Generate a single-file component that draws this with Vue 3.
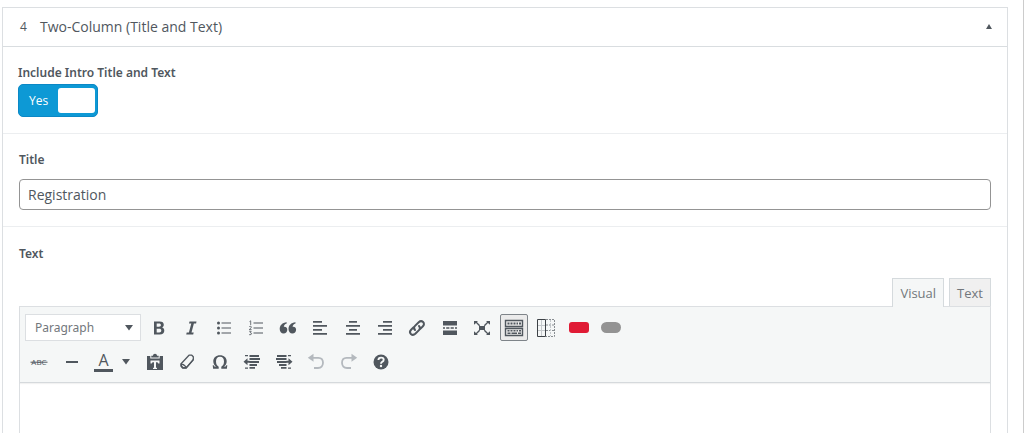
<script setup>
import { ref } from 'vue'

const intro = ref(true)
const title = ref('Registration')
const block = ref('Paragraph')

const mainTools = [
  'Bold', 'Italic', 'Bulleted list', 'Numbered list', 'Blockquote',
  'Align left', 'Align center', 'Align right', 'Insert link', 'Read more',
  'Fullscreen', 'Toolbar toggle', 'Columns', 'Red button', 'Grey button',
]
const leadTools = ['Strikethrough', 'Horizontal line']
const moreTools = [
  'Paste as text', 'Clear formatting', 'Special character', 'Decrease indent',
  'Increase indent', 'Undo', 'Redo', 'Help',
]

const icons = {
  'Bold': '<path fill-rule="evenodd" d="M5 3.500h5.600c2.900 0 4.200 1.200 4.200 3.300 0 1.400-.8 2.400-1.900 2.800 1.500.3 2.400 1.400 2.400 3.100 0 2.400-1.700 3.800-4.500 3.800H5zM7.700 5.500v3.200H10c1.300 0 1.900-.6 1.900-1.600S11.300 5.500 10 5.500zm0 5.200v3.700h2.500c1.400 0 2.100-.6 2.100-1.900 0-1.200-.7-1.800-2.100-1.800z"/>',
  'Italic': '<path d="M8.500 3.500h7l-.4 1.900h-2.200l-2.400 9.200h2.200l-.5 1.900h-7l.5-1.900h2.200l2.400-9.200H8z"/>',
  'Bulleted list': '<circle cx="4.500" cy="5" r="1.500"/><circle cx="4.500" cy="10" r="1.500"/><circle cx="4.500" cy="15" r="1.500"/><path d="M7.500 4.400H17v1.200H7.500zM7.500 9.400H17v1.200H7.500zM7.500 14.400H17v1.200H7.500z"/>',
  'Numbered list': '<path d="M7.500 4.400H17v1.200H7.500zM7.500 9.400H17v1.200H7.500zM7.500 14.400H17v1.200H7.500z"/><path fill="none" stroke="currentColor" stroke-width=".8" d="M3.500 3.600l1.200-.8V7M3.200 9q.3-.7 1.200-.7 1 0 1 .8 0 .8-2.200 2.500h2.400M3.200 13.300h2l-1 1.400q1.400 0 1.400 1.100 0 1.200-2.500.9"/>',
  'Blockquote': '<path d="M8.700 4.200v1.200C6.900 6 5.900 7.200 5.800 8.800c2-.4 3.500 1 3.500 3 0 2.200-1.600 3.800-3.700 3.800-2.300 0-3.900-1.900-3.900-4.600 0-3.800 2.600-6.300 7-6.800zM17.500 4.200v1.200c-1.800.6-2.800 1.800-2.900 3.400 2-.4 3.500 1 3.500 3 0 2.200-1.600 3.800-3.700 3.800-2.300 0-3.900-1.900-3.900-4.600 0-3.800 2.600-6.300 7-6.800z"/>',
  'Align left': '<path d="M3 3h9v1.700H3zM3 7h14v1.700H3zM3 11h9v1.700H3zM3 15h14v1.700H3z"/>',
  'Align center': '<path d="M6 3h8v1.700H6zM3 7h14v1.700H3zM6 11h8v1.700H6zM3 15h14v1.700H3z"/>',
  'Align right': '<path d="M8 3h9v1.700H8zM3 7h14v1.700H3zM8 11h9v1.700H8zM3 15h14v1.700H3z"/>',
  'Insert link': '<g fill="none" stroke="currentColor" stroke-width="2" stroke-linecap="round"><path d="M8 12c-1.200-1.200-1.200-2.900 0-4.100l3.700-3.700c1.400-1.300 3.200-1.300 4.400-.2 1.200 1.200 1.100 3-.2 4.300l-2.300 2.300"/><path d="M12 8c1.200 1.200 1.200 2.900 0 4.100l-3.700 3.700c-1.400 1.300-3.200 1.300-4.400.2-1.200-1.200-1.100-3 .2-4.300l2.300-2.300"/></g>',
  'Read more': '<path d="M3 3h14v4.500H3zM3 9.300h2v1.500H3zM6.200 9.300h3.200v1.500H6.200zM10.600 9.300h3.200v1.500h-3.200zM15 9.300h2v1.500h-2zM3 12.500h14V17H3z"/>',
  'Fullscreen': '<path d="M7 8h6v4H7z"/><path d="M2 3h4L4.900 4.100l3.300 3.100-1 1-3.200-3.200L2 6.800zM18 3h-4l1.100 1.100-3.300 3.100 1 1L16 5l2 1.800zM2 17h4l-1.100-1.100 3.300-3.100-1-1L4 15l-2-1.800zM18 17h-4l1.100-1.100-3.300-3.100 1-1L16 15l2-1.800z"/>',
  'Toolbar toggle': '<path fill="none" stroke="currentColor" stroke-width="1.400" d="M1.500 2.500h17v6h-17zM1.500 10.500h17v7h-17z"/><path d="M3.500 4.500h2v2h-2zM6.500 4.500h2v2h-2zM9.500 4.500h2v2h-2zM12.500 4.500h1.500v2h-1.500zM15 4.500h2v2h-2zM3.500 12h2v1.500h-2zM6.500 12h2v1.500h-2zM9.500 12h2v1.500h-2zM12.500 12H14v1.500h-1.500zM15 12h2v1.500h-2zM3.500 14.500h3V16h-3zM7.500 14.500H13V16H7.500zM14 14.500h3V16h-3z"/>',
  'Columns': '<g fill="none" stroke="currentColor"><path stroke="#888d91" stroke-dasharray="2 1" d="M10 1.500h8.500v17H10M10 7h8.500M10 12.500h8.500"/><path stroke="#c4c8cb" stroke-dasharray="2 1" d="M14.500 2v16"/><path stroke="#c4c8cb" d="M2 7.500h7M2 12.500h7M5.500 2v16"/><path stroke="#3c4146" d="M1.500 1.500h8v17h-8z"/></g>',
  'Strikethrough': '<text x="10" y="13" font-size="8" font-family="Open Sans, sans-serif" text-anchor="middle">ABC</text><path d="M1.500 9.700h17v1h-17z"/>',
  'Horizontal line': '<path d="M4 9h12v2H4z"/>',
  'Paste as text': '<path fill-rule="evenodd" d="M2 4h3.300v2.500h9.400V4H18v14H2zM5.500 8.500v3h1.300c.1-1 .6-1.300 2.200-1.300v5c0 .5-.3.700-1 .8v1h4v-1c-.7-.1-1-.3-1-.8v-5c1.600 0 2.100.3 2.200 1.300h1.300v-3z"/><path d="M6.300 3.800h1.600C8.100 2.500 8.800 1.800 10 1.800s1.900.7 2.100 2h1.600v1.800H6.300z"/>',
  'Clear formatting': '<path fill="none" stroke="currentColor" stroke-width="1.300" stroke-linejoin="round" d="M12 3.200h2.800l1.500 1.500v3.200l-7.300 8.300H5.800l-1.700-1.900v-2.500z"/><path d="M3.500 11.500l3.300.6 2.700 2.300 6.800-7.900v2l-7 8H6l-2.500-2.500zm1.500 1.600v.7l1.300 1.300h1.500v-.5l-1.500-1.200z"/>',
  'Special character': '<path d="M10 3.300c4 0 6.700 2.500 6.700 6.100 0 2.200-1.100 4-3 5.200h2l.6-1.400h1l-.4 3.500h-5.600v-1.900c1.700-1 2.700-2.700 2.700-5.200 0-3-1.400-4.800-4-4.800S6 6.600 6 9.600c0 2.500 1 4.200 2.700 5.200v1.900H3.100l-.4-3.500h1l.6 1.400h2c-1.900-1.200-3-3-3-5.200 0-3.600 2.700-6.100 6.700-6.100z"/>',
  'Decrease indent': '<path d="M3 3h3v1.200H3zM7.500 3H17v1.900H7.500zM7.500 6H18v1.900H7.500zM7.500 9H17v1.900H7.500zM7.500 12H15v1.900H7.500zM7.500 15H13v1.700H7.500zM3 15.500h3v1.200H3zM1.500 9.700l4-3.500v2.500h2v2h-2v2.500z"/>',
  'Increase indent': '<path d="M14 3h3v1.200h-3zM3 3h9.500v1.900H3zM2 6h10.500v1.900H2zM3 9h9.500v1.900H3zM5 12h7.500v1.900H5zM7 15h5.500v1.700H7zM14 15.500h3v1.200h-3zM18.500 9.700l-4-3.500v2.500h-2v2h2v2.500z"/>',
  'Undo': '<path d="M7.500 1.800v8L1.800 5.800z"/><path fill="none" stroke="currentColor" stroke-width="1.800" d="M6.500 5.800h6q4.500.2 4.500 5-.2 5.200-5 5.200H8"/>',
  'Redo': '<path d="M12.500 1.800v8l5.700-4z"/><path fill="none" stroke="currentColor" stroke-width="1.800" d="M13.500 5.800h-6Q3 6 3 10.800 3.200 16 8 16h4"/>',
  'Help': '<circle cx="10" cy="10" r="7.500"/><path fill="none" stroke="#f5f7f7" stroke-width="1.900" d="M7.400 8.100q0-2.500 2.700-2.500 2.600 0 2.600 2.100 0 1.300-1.500 2.100-1.200.7-1.200 2"/><circle cx="10" cy="14" r="1.200" fill="#f5f7f7"/>',
}
</script>

<template>
  <main class="page">
    <section class="panel">
      <header class="head">
        <span class="order">4</span>
        <h2>Two-Column (Title and Text)</h2>
        <button class="collapse" type="button" aria-label="Collapse section">
          <svg viewBox="0 0 8 6"><path d="M4 0l3 5H1z" /></svg>
        </button>
      </header>

      <div class="field">
        <label class="name" for="intro">Include Intro Title and Text</label>
        <label class="switch">
          <input id="intro" v-model="intro" type="checkbox">
          <span class="state">{{ intro ? 'Yes' : 'No' }}</span>
          <span class="knob"></span>
        </label>
      </div>

      <div class="field title-field">
        <label class="name" for="title">Title</label>
        <input id="title" v-model="title" class="text-input" type="text">
      </div>

      <div class="field editor-field">
        <span id="text-label" class="name">Text</span>
        <div class="tabs">
          <button class="tab active" type="button">Visual</button>
          <button class="tab" type="button">Text</button>
        </div>
        <div class="editor">
          <div class="toolbar">
            <div class="row">
              <div class="picker">
                <select v-model="block" aria-label="Block format">
                  <option>Paragraph</option>
                  <option>Heading 2</option>
                </select>
                <svg viewBox="0 0 10 7"><path d="M1 1h8L5 6.500z" /></svg>
              </div>
              <div class="tools main-tools">
                <button
                  v-for="name in mainTools" :key="name" type="button" class="tool"
                  :class="{ pressed: name === 'Toolbar toggle' }" :aria-label="name"
                >
                  <span v-if="name === 'Red button'" class="chip red"></span>
                  <span v-else-if="name === 'Grey button'" class="chip grey"></span>
                  <svg v-else viewBox="0 0 20 20" v-html="icons[name]"></svg>
                </button>
              </div>
            </div>
            <div class="row">
              <div class="tools lead-tools">
                <button v-for="name in leadTools" :key="name" type="button" class="tool" :aria-label="name">
                  <svg viewBox="0 0 20 20" v-html="icons[name]"></svg>
                </button>
              </div>
              <div class="color">
                <button type="button" class="letter" aria-label="Text color">A</button>
                <button type="button" class="open" aria-label="Choose text color">
                  <svg viewBox="0 0 10 7"><path d="M1 1h8L5 6.500z" /></svg>
                </button>
              </div>
              <div class="tools more-tools">
                <button
                  v-for="name in moreTools" :key="name" type="button" class="tool"
                  :disabled="name === 'Undo' || name === 'Redo'" :aria-label="name"
                >
                  <svg viewBox="0 0 20 20" v-html="icons[name]"></svg>
                </button>
              </div>
            </div>
          </div>
          <div class="content" contenteditable="true" role="textbox" aria-labelledby="text-label"></div>
        </div>
      </div>
    </section>
  </main>
</template>

<style>
body {
  background: #fff;
}
</style>

<style scoped>
* {
  box-sizing: border-box;
}
.page {
  display: flex;
  min-height: 100vh;
  padding: 7px 15px 0 2px;
  border-right: 1px solid #ccc;
  color: #50575e;
  font: 14px/20px "Open Sans", "Noto Sans", sans-serif;
}
button,
input,
select {
  margin: 0;
  font: inherit;
  color: inherit;
}
button {
  display: flex;
  align-items: center;
  justify-content: center;
  padding: 0;
  border: 0;
  background: none;
}
svg {
  display: block;
  fill: currentColor;
}
.panel {
  flex: 1;
  display: flex;
  flex-direction: column;
  border: 1px solid #dcdfe2;
  border-bottom: 0;
}
.head {
  display: flex;
  align-items: center;
  height: 39px;
  padding: 0 14px 0 17px;
  border-bottom: 1px solid #d9dde0;
}
.order {
  width: 20px;
  font-size: 12px;
}
h2 {
  flex: 1;
  margin: 0;
  font-size: 14px;
  font-weight: 400;
}
.collapse svg {
  width: 8px;
  height: 6px;
}
.field {
  padding: 16px 16px 16px 15px;
  border-bottom: 1px solid #eceef0;
}
.name {
  display: block;
  font-size: 12px;
  font-weight: 600;
  font-family: "Noto Sans", "Open Sans", sans-serif;
}
.switch {
  display: flex;
  align-items: center;
  width: 80px;
  height: 33px;
  margin-top: 1px;
  padding: 0 2px 0 10px;
  border: 1px solid #0b88c6;
  border-radius: 5px;
  background: #0d99d5;
  color: #fff;
  font-size: 12px;
}
.switch input {
  position: absolute;
  opacity: 0;
}
.state {
  flex: 1;
}
.knob {
  width: 37px;
  height: 25px;
  border-radius: 3px;
  background: #fff;
}
.title-field {
  padding-left: 16px;
}
.text-input {
  display: block;
  width: 100%;
  height: 31px;
  margin-top: 9px;
  padding: 0 8px;
  border: 1px solid #949494;
  border-radius: 4px;
  background: #fff;
}
.editor-field {
  flex: 1;
  display: flex;
  flex-direction: column;
  padding: 17px 16px 0;
  border-bottom: 0;
}
.tabs {
  display: flex;
  justify-content: flex-end;
  gap: 5px;
  margin-top: 14px;
}
.tab {
  height: 28px;
  padding: 0 7px;
  border: 1px solid #d5dadd;
  border-bottom: 0;
  background: #f0f0f0;
  color: #72777c;
  font-size: 13px;
}
.tab.active {
  z-index: 1;
  height: 29px;
  margin-bottom: -1px;
  background: #f5f7f7;
}
.editor {
  flex: 1;
  display: flex;
  flex-direction: column;
  border: 1px solid #dcdfe2;
  border-bottom: 0;
}
.toolbar {
  padding: 7px 5px;
  border-bottom: 1px solid #d5d9dc;
  background: #f5f7f7;
  box-shadow: 0 1px 1px #0000000d;
}
.row {
  display: flex;
  height: 27px;
}
.row + .row {
  margin-top: 7px;
}
.picker {
  display: grid;
  width: 116px;
  border: 1px solid #dcdfe2;
  background: #fff;
}
.picker > * {
  grid-area: 1 / 1;
}
.picker select {
  width: 100%;
  padding: 0 9px;
  border: 0;
  background: none;
  color: #72777c;
  font-family: "Noto Sans", "Open Sans", sans-serif;
  font-size: 12px;
  appearance: none;
}
.picker svg,
.open svg {
  width: 10px;
  height: 7px;
}
.picker svg {
  place-self: center end;
  margin-right: 6px;
  pointer-events: none;
}
.tools {
  display: grid;
  grid-auto-flow: column;
  grid-auto-columns: 1fr;
  justify-items: center;
}
.main-tools {
  width: 484px;
  margin-left: 2px;
}
.lead-tools {
  width: 65px;
  margin-left: -2px;
}
.more-tools {
  width: 258px;
}
.tool {
  width: 28px;
  height: 27px;
}
.tool svg {
  width: 20px;
  height: 20px;
}
.tool:disabled {
  color: #b4b9be;
}
.pressed {
  border: 1px solid #7e8489;
  border-radius: 2px;
  background: #ebebeb;
}
.chip {
  width: 20px;
  height: 11px;
  border-radius: 3px;
}
.red {
  background: #e01b35;
}
.grey {
  border-radius: 6px;
  background: #939393;
}
.color {
  display: flex;
  align-items: center;
  width: 51px;
  padding-left: 6px;
}
.letter {
  width: 20px;
  height: 20px;
  border-bottom: 3px solid #50575e;
  font-size: 16px;
  line-height: 16px;
}
.open {
  width: 27px;
  height: 27px;
}
.content {
  flex: 1;
  min-height: 48px;
  outline: 0;
}
</style>
